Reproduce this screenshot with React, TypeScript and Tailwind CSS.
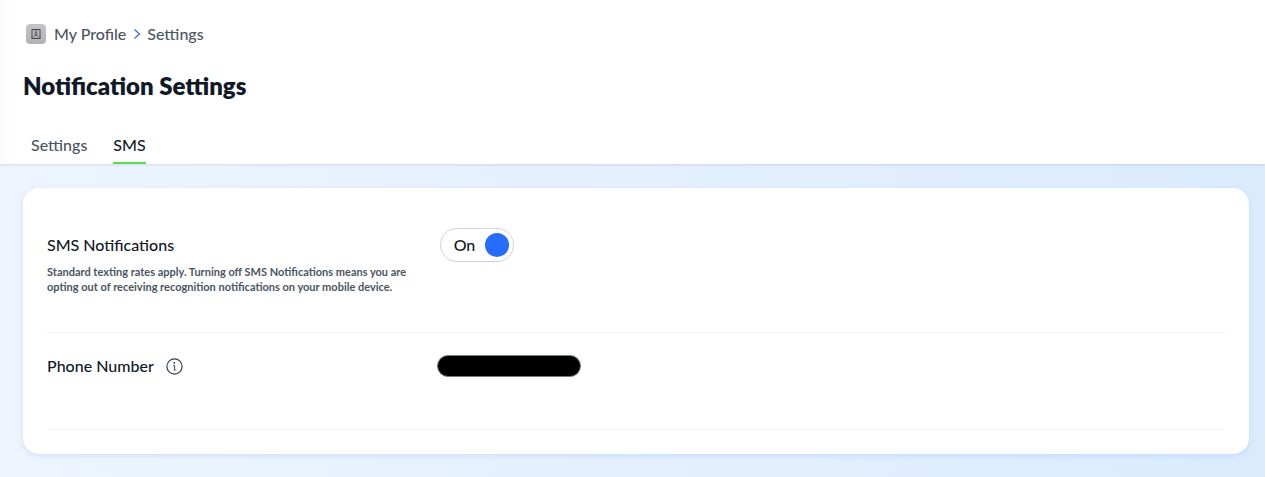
import { useState } from 'react'

const ProfileIcon = () => (
    <span className="flex h-5 w-5 items-center justify-center rounded bg-linear-to-b from-[#c4c4c8] to-[#b2b2b7]">
        <svg className="h-3 w-3" viewBox="0 0 12 12" fill="none" stroke="#454549" aria-hidden="true">
            <rect x="2" y="1.5" width="8" height="9" strokeWidth="1" />
            <path d="M4.5 3h3" strokeWidth="0.8" />
            <circle cx="6" cy="5.6" r="1.2" strokeWidth="0.8" />
            <path d="M4 9.3c0-1.3.8-2 2-2s2 .7 2 2" strokeWidth="0.8" />
        </svg>
    </span>
)

const InfoIcon = () => (
    <svg className="h-[17px] w-[17px]" viewBox="0 0 17 17" fill="none" stroke="#374151" aria-hidden="true">
        <circle cx="8.5" cy="8.5" r="7.6" strokeWidth="1.2" />
        <circle cx="8.3" cy="5" r="0.9" fill="#374151" stroke="none" />
        <path d="M7.2 7.5h1.4v4.3M7.6 12h2.2" strokeWidth="1" />
    </svg>
)

const Breadcrumb = () => (
    <nav aria-label="Breadcrumb" className="px-[26px]">
        <ol className="flex h-5 items-center text-base text-[#4b5563]">
            <li>
                <a href="#profile" className="flex items-center gap-2">
                    <ProfileIcon />
                    My Profile
                </a>
            </li>
            <li className="flex items-center">
                <svg className="mr-1.5 ml-[7px] h-3 w-2" viewBox="0 0 8 12" fill="none" stroke="#2f5bff" aria-hidden="true">
                    <path d="M1.5 1.5 6.5 6 1.5 10.5" strokeWidth="1.1" />
                </svg>
                <a href="#settings">Settings</a>
            </li>
        </ol>
    </nav>
)

export default function App() {
    const [enabled, setEnabled] = useState(true)

    return (
        <div className="flex min-h-screen flex-col bg-linear-to-r from-[#edf4fe] to-[#daebfe] font-['Lato',sans-serif] font-medium text-[#111827]">
            <header className="bg-linear-to-r from-[#fafafa] to-white to-[12px] pt-6 shadow-[0_1px_2px_rgba(30,41,90,0.12)]">
                <Breadcrumb />
                <h1 className="mt-7 px-[23px] text-2xl leading-7 font-extrabold">Notification Settings</h1>
                <nav aria-label="Settings sections" className="mt-7 flex gap-[26px] px-[31px]">
                    <a href="#general" className="flex h-9 items-center border-b-2 border-transparent text-[#4b5563]">
                        Settings
                    </a>
                    <a href="#sms" aria-current="page" className="flex h-9 items-center border-b-2 border-[#5edc4b]">
                        SMS
                    </a>
                </nav>
            </header>

            <main className="flex-1 py-6 pr-4 pl-[23px]">
                <div className="rounded-2xl bg-white p-6 shadow-[0_2px_5px_rgba(59,110,246,0.14)]">
                    <section className="grid grid-cols-3 border-b border-[#f3f4f6] pt-4 pb-[38px]">
                        <div>
                            <label htmlFor="sms" className="flex h-[34px] items-center">
                                SMS Notifications
                            </label>
                            <p id="sms-help" className="mt-0.5 text-[11px] leading-[15px] font-bold text-[#4b5563]">
                                Standard texting rates apply. Turning off SMS Notifications means you are
                                <br />
                                opting out of receiving recognition notifications on your mobile device.
                            </p>
                        </div>
                        <div>
                            <label className="flex h-[34px] w-[74px] cursor-pointer items-center justify-between rounded-full border border-[#d1d1dc] pr-1 pl-[13px]">
                                <span>{enabled ? 'On' : 'Off'}</span>
                                <input
                                    id="sms"
                                    type="checkbox"
                                    role="switch"
                                    aria-describedby="sms-help"
                                    checked={enabled}
                                    onChange={(e) => setEnabled(e.target.checked)}
                                    className="h-6 w-6 cursor-pointer appearance-none rounded-full bg-gray-400 checked:bg-[#256cff]"
                                />
                            </label>
                        </div>
                    </section>

                    <section className="grid grid-cols-3 border-b border-[#f3f4f6] pt-[22px] pb-[52px]">
                        <div className="flex h-[22px] items-center gap-3">
                            <label htmlFor="phone">Phone Number</label>
                            <button type="button" aria-label="About phone number">
                                <InfoIcon />
                            </button>
                        </div>
                        <div className="-ml-[3px]">
                            <input
                                id="phone"
                                type="tel"
                                readOnly
                                className="block h-[22px] w-36 rounded-full border border-[#6b7f73] bg-black px-3 text-black"
                            />
                        </div>
                    </section>
                </div>
            </main>
        </div>
    )
}
